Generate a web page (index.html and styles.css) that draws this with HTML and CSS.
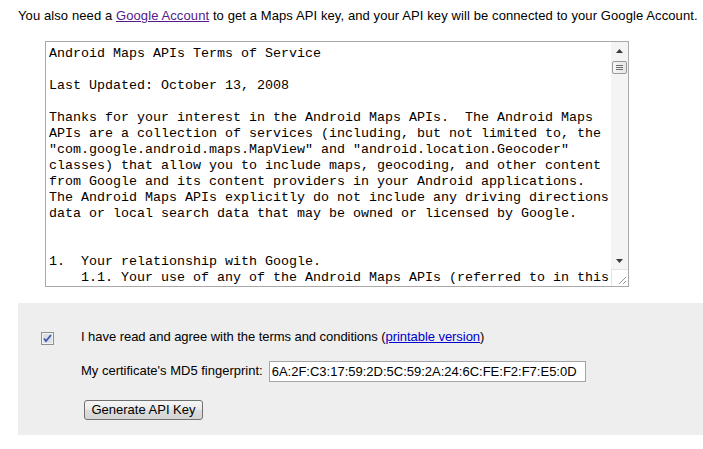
FILE: index.html
```html
<!DOCTYPE html>
<html>
<head>
<meta charset="utf-8">
<link rel="stylesheet" href="styles.css">
</head>
<body>
<p class="intro">You also need a <a class="visited" href="#">Google Account</a> to get a Maps API key, and your API key will be connected to your Google Account.</p>
<div class="tos-box">
<div class="tos-text">Android Maps APIs Terms of Service

Last Updated: October 13, 2008

Thanks for your interest in the Android Maps APIs.  The Android Maps
APIs are a collection of services (including, but not limited to, the
"com.google.android.maps.MapView" and "android.location.Geocoder"
classes) that allow you to include maps, geocoding, and other content
from Google and its content providers in your Android applications.
The Android Maps APIs explicitly do not include any driving directions
data or local search data that may be owned or licensed by Google.


1.  Your relationship with Google.
    1.1. Your use of any of the Android Maps APIs (referred to in this
document as the "Maps APIs") is subject to the terms of a legal
agreement between you and Google.</div>
<div class="scrollbar">
<div class="sb-arrow">
<svg width="7" height="4" viewBox="0 0 7 4"><path d="M0 4 L3.5 0 L7 4 Z" fill="#3a3a3a"/></svg>
</div>
<div class="sb-thumb"><span></span><span></span><span></span></div>
<div class="sb-track"></div>
<div class="sb-arrow">
<svg width="7" height="4" viewBox="0 0 7 4"><path d="M0 0 L7 0 L3.5 4 Z" fill="#3a3a3a"/></svg>
</div>
<div class="sb-grip">
<svg width="16" height="16" viewBox="0 0 16 16"><path d="M14 7 L7 14 M14 11 L11 14" stroke="#9a9a9a" stroke-width="1"/></svg>
</div>
</div>
</div>

<div class="panel">
<div class="agree-row">
<span class="checkbox">
<svg width="13" height="13" viewBox="0 0 13 13">
<rect x="0.5" y="0.5" width="12" height="12" fill="#e4e4e4" stroke="#8e8f8f"/>
<rect x="1.5" y="1.5" width="10" height="10" fill="#dcdfe6" stroke="#f4f4f4"/>
<path d="M3 6.5 L5 9 L10 3" fill="none" stroke="#3d5aa8" stroke-width="1.8"/>
</svg>
</span>
<span class="agree-text">I have read and agree with the terms and conditions (<a href="#">printable version</a>)</span>
</div>
<div class="cert-row">
<label class="cert-label">My certificate's MD5 fingerprint:</label>
<div class="cert-input">6A:2F:C3:17:59:2D:5C:59:2A:24:6C:FE:F2:F7:E5:0D</div>
</div>
<div class="btn-row">
<button class="gen-btn">Generate API Key</button>
</div>
</div>
</body>
</html>
```
FILE: styles.css
```css
html, body {
  margin: 0;
  padding: 0;
  background: #fff;
}
body {
  font-family: "Liberation Sans", Arial, sans-serif;
  font-size: 13px;
  color: #000;
  width: 703px;
  height: 449px;
  overflow: hidden;
}
a {
  color: #0000cc;
  text-decoration: underline;
}
a.visited {
  color: #551a8b;
}
.intro {
  margin: 8px 0 0 18px;
  line-height: 16px;
  letter-spacing: 0.1px;
  white-space: nowrap;
}
.tos-box {
  margin: 17px 0 0 45px;
  width: 584px;
  height: 246px;
  box-sizing: border-box;
  border: 1px solid #a9a9a9;
  display: flex;
  background: #fff;
}
.tos-text {
  flex: 1;
  overflow: hidden;
  padding: 4px 2px 0 3px;
  font-family: "Liberation Mono", "Courier New", monospace;
  font-size: 13.33px;
  line-height: 16px;
  white-space: pre-wrap;
  color: #000;
}
.scrollbar {
  width: 17px;
  display: flex;
  flex-direction: column;
  background: #f4f4f4;
}
.sb-arrow {
  height: 17px;
  display: flex;
  align-items: center;
  justify-content: center;
}
.sb-thumb {
  margin: 2px 1px 0 1px;
  height: 13px;
  box-sizing: border-box;
  border: 1px solid #9a9a9a;
  border-radius: 2px;
  background: linear-gradient(to right, #f6f6f6, #e6e6e6);
  display: flex;
  flex-direction: column;
  align-items: center;
  justify-content: center;
  gap: 1px;
}
.sb-thumb span {
  width: 7px;
  height: 1px;
  background: #6e6e6e;
}
.sb-track {
  flex: 1;
}
.sb-grip {
  height: 16px;
  background: #fff;
  border-left: 1px solid #e2e2e2;
  border-top: 1px solid #e2e2e2;
}
.sb-grip svg {
  display: block;
}
.panel {
  margin: 16px 0 0 18px;
  height: 132px;
  box-sizing: border-box;
  background: #eeeeee;
  padding: 26px 0 0 23px;
}
.agree-row {
  display: flex;
  align-items: flex-start;
  line-height: 16px;
}
.checkbox {
  width: 13px;
  height: 13px;
  margin-top: 3px;
  margin-right: 27px;
  display: block;
}
.checkbox svg {
  display: block;
}
.agree-text {
  letter-spacing: -0.05px;
}
.cert-row {
  display: flex;
  align-items: flex-start;
  margin: 16px 0 0 40px;
}
.cert-label {
  line-height: 16px;
  margin-top: 2px;
  margin-right: 6px;
}
.cert-input {
  width: 317px;
  height: 21px;
  box-sizing: border-box;
  border: 1px solid #a5a5a5;
  background: #fff;
  padding: 0 0 0 2px;
  line-height: 20px;
  font-size: 13px;
  white-space: nowrap;
  overflow: hidden;
}
.btn-row {
  margin: 18px 0 0 43px;
}
.gen-btn {
  width: 119px;
  height: 20px;
  box-sizing: border-box;
  border: 1px solid #707070;
  border-radius: 3px;
  background: linear-gradient(to bottom, #f6f6f6 0%, #e8e8e8 50%, #dcdcdc 51%, #d4d4d4 100%);
  font-family: "Liberation Sans", Arial, sans-serif;
  font-size: 13px;
  color: #000;
  padding: 0;
  line-height: 16px;
  display: block;
}
```
